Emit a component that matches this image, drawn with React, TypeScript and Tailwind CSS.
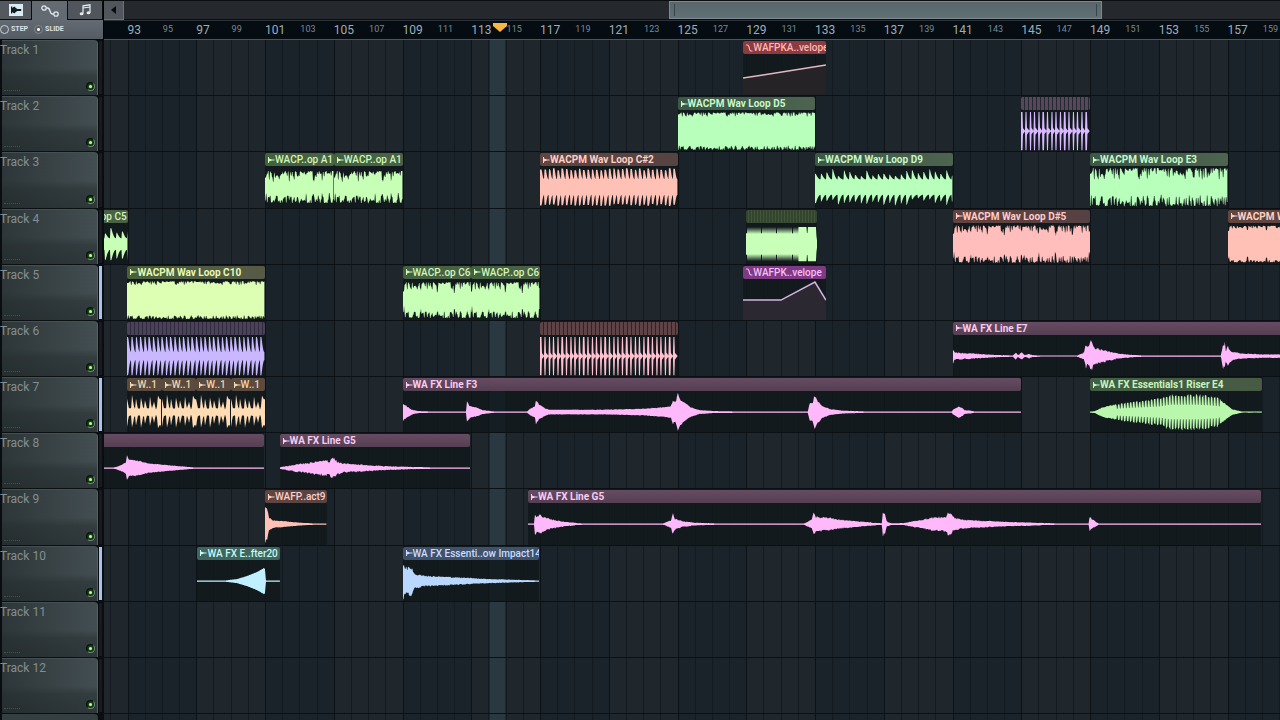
import clsx from 'clsx'

const FIRST_BAR = 91.633
const BAR_SPAN = 68.42
const SAMPLES_PER_BAR = 17.2

type Point = [number, number]

type Wave =
    | { kind: 'noise', level: number, jitter: number, dipEvery?: number, dip?: number }
    | { kind: 'hits', period: number, base: number, peak: number, hold: number, jitter?: number, tail?: number }
    | { kind: 'gate' }
    | { kind: 'riser' }
    | { kind: 'envelope', points: Point[], ripple?: number }
    | { kind: 'automation', points: Point[] }

type Tone = keyof typeof tones

interface Clip {
    title?: string
    start: number
    length: number
    tone: Tone
    wave: Wave
}

interface Track {
    name: string
    active?: boolean
    clips: Clip[]
}

const tones = {
    green: { bar: 'bg-linear-to-r from-[#3b5945] to-[#4c6450] text-[#c9f7cb]', wave: 'fill-[#b8ffbc]' },
    leaf: { bar: 'bg-linear-to-r from-[#42613f] to-[#4b6146] text-[#d2f7b8]', wave: 'fill-[#c8ffb6]' },
    lime: { bar: 'bg-linear-to-r from-[#49603b] to-[#575a46] text-[#e6f9b4]', wave: 'fill-[#dcffb4]' },
    coral: { bar: 'bg-linear-to-r from-[#62453f] to-[#554443] text-[#ffcfc6]', wave: 'fill-[#ffc0b6]' },
    rose: { bar: 'bg-linear-to-r from-[#62443f] to-[#554043] text-[#ffcbc8]', wave: 'fill-[#ffbdbb]' },
    orange: { bar: 'bg-[#5a4b3e] text-[#f2d6b0]', wave: 'fill-[#ffdcb4]' },
    pink: { bar: 'bg-linear-to-b from-[#664c62] to-[#553f52] text-[#f8cbf1]', wave: 'fill-[#ffb9fa]' },
    teal: { bar: 'bg-[#3e6560] text-[#c9f9f0]', wave: 'fill-[#c0f0ff]' },
    blue: { bar: 'bg-[#40516a] text-[#cbdcff]', wave: 'fill-[#b9d7ff]' },
    forest: { bar: 'bg-linear-to-r from-[#405f43] to-[#485a44] text-[#c8f3bd]', wave: 'fill-[#b9f8ac]' },
    red: { bar: 'bg-[#8d3b42] text-[#ffb7b3]', wave: 'fill-[#252326] stroke-[#e2b6c4]' },
    magenta: { bar: 'bg-[#7e3a82] text-[#f6bdf8]', wave: 'fill-[#2b2832] stroke-[#d3b4e2]' },
    violetSlices: { bar: 'bg-[repeating-linear-gradient(90deg,#4c415c_0_3px,#2f2c3a_3px_4px)]', wave: 'fill-[#c9b8ff]' },
    plumSlices: { bar: 'bg-[repeating-linear-gradient(90deg,#584759_0_3px,#252832_3px_4px)]', wave: 'fill-[#d8b9ff]' },
    roseSlices: { bar: 'bg-[repeating-linear-gradient(90deg,#5e4346_0_3px,#26262b_3px_4px)]', wave: 'fill-[#ffc0cf]' },
    olive: { bar: 'bg-[repeating-linear-gradient(90deg,#33452f_0_2px,#435539_2px_3px)]', wave: 'fill-[#c8ffb9]' },
}

const sliceHits: Wave = { kind: 'hits', period: 4.3, base: 0, peak: 1, hold: 0.35, tail: 0.3 }

const tracks: Track[] = [
    {
        name: 'Track 1',
        clips: [
            { title: 'WAFPKA..velope', start: 128.83, length: 4.83, tone: 'red', wave: { kind: 'automation', points: [[0, 23], [20, 20], [83, 10]] } },
        ]
    },
    {
        name: 'Track 2',
        clips: [
            { title: 'WACPM Wav Loop D5', start: 125, length: 8, tone: 'green', wave: { kind: 'noise', level: 0.98, jitter: 0.22 } },
            { start: 145, length: 4, tone: 'plumSlices', wave: sliceHits },
        ]
    },
    {
        name: 'Track 3',
        clips: [
            { title: 'WACP..op A1', start: 101, length: 4, tone: 'leaf', wave: { kind: 'noise', level: 0.84, jitter: 0.45, dipEvery: 8, dip: 0.12 } },
            { title: 'WACP..op A1', start: 105, length: 4, tone: 'leaf', wave: { kind: 'noise', level: 0.84, jitter: 0.45, dipEvery: 8, dip: 0.12 } },
            { title: 'WACPM Wav Loop C#2', start: 117, length: 8, tone: 'coral', wave: { kind: 'hits', period: 4.3, base: 0.4, peak: 1, hold: 0.4, jitter: 0.12 } },
            { title: 'WACPM Wav Loop D9', start: 133, length: 8, tone: 'green', wave: { kind: 'hits', period: 5.7, base: 0.4, peak: 0.98, hold: 0.15, jitter: 0.4 } },
            { title: 'WACPM Wav Loop E3', start: 149, length: 8, tone: 'green', wave: { kind: 'noise', level: 1, jitter: 0.6 } },
        ]
    },
    {
        name: 'Track 4',
        clips: [
            { title: 'WACP..op C5', start: 89, length: 4, tone: 'leaf', wave: { kind: 'hits', period: 5.7, base: 0.3, peak: 0.95, hold: 0.2, jitter: 0.4 } },
            { start: 128.96, length: 4.16, tone: 'olive', wave: { kind: 'gate' } },
            { title: 'WACPM Wav Loop D#5', start: 141, length: 8, tone: 'rose', wave: { kind: 'noise', level: 0.98, jitter: 0.38, dipEvery: 17, dip: 0.25 } },
            { title: 'WACPM Wav Loop D#5', start: 157, length: 8, tone: 'coral', wave: { kind: 'noise', level: 0.96, jitter: 0.14, dipEvery: 19, dip: 0.2 } },
        ]
    },
    {
        name: 'Track 5',
        active: true,
        clips: [
            { title: 'WACPM Wav Loop C10', start: 93, length: 8, tone: 'lime', wave: { kind: 'noise', level: 0.99, jitter: 0.2 } },
            { title: 'WACP..op C6', start: 109, length: 4, tone: 'leaf', wave: { kind: 'noise', level: 0.94, jitter: 0.38, dipEvery: 17, dip: 0.3 } },
            { title: 'WACP..op C6', start: 113, length: 4, tone: 'leaf', wave: { kind: 'noise', level: 0.94, jitter: 0.38, dipEvery: 17, dip: 0.3 } },
            { title: 'WAFPK..velope', start: 128.83, length: 4.83, tone: 'magenta', wave: { kind: 'automation', points: [[0, 20], [38, 20], [72, 2], [83, 20]] } },
        ]
    },
    {
        name: 'Track 6',
        clips: [
            { start: 93, length: 8, tone: 'violetSlices', wave: { kind: 'hits', period: 4.3, base: 0.2, peak: 1, hold: 0.3 } },
            { start: 117, length: 8, tone: 'roseSlices', wave: sliceHits },
            {
                title: 'WA FX Line E7', start: 141, length: 24, tone: 'pink', wave: {
                    kind: 'envelope', ripple: 0.3, points: [
                        [0, 8], [2, 4], [20, 3], [40, 1.4], [60, 0.6], [63, 4], [65, 1], [69, 4], [72, 1], [76, 2.5], [80, 1], [88, 0.5],
                        [124, 0.5], [131, 4], [133, 14], [135, 9], [138, 17], [141, 9], [150, 7], [160, 4], [172, 2], [190, 0.6],
                        [268, 0.6], [270, 12], [272, 15], [273, 6], [275, 10], [279, 5], [288, 3], [310, 2], [330, 2], [412, 1],
                    ]
                }
            },
        ]
    },
    {
        name: 'Track 7',
        active: true,
        clips: [
            ...[93, 95, 97, 99].map((start): Clip => ({
                title: 'W..1', start, length: 2, tone: 'orange', wave: {
                    kind: 'envelope', ripple: 0.15, points: [
                        [0, 15], [2, 4], [4, 4], [5, 18], [7, 6], [8, 4], [9, 14], [11, 4], [13, 4], [14, 17], [16, 5], [17, 4], [18, 13],
                        [20, 4], [22, 4], [23, 16], [25, 4], [27, 11], [29, 3], [30, 6], [31, 17], [33, 14], [34.4, 15],
                    ]
                }
            })),
            {
                title: 'WA FX Line F3', start: 109, length: 36, tone: 'pink', wave: {
                    kind: 'envelope', ripple: 0.15, points: [
                        [0, 9], [4, 6], [9, 2.5], [16, 1], [30, 0.6], [63, 0.6], [64, 11], [67, 6], [73, 5], [80, 2], [92, 0.6],
                        [124, 0.6], [128, 4], [132, 6], [133, 13], [136, 8], [142, 4], [146, 2.5], [200, 2.5], [240, 3.5], [260, 5],
                        [268, 6], [270, 12], [273, 11], [275, 19], [278, 13], [283, 9], [288, 5], [297, 2], [312, 1], [340, 0.6],
                        [405, 0.6], [407, 9], [410, 10], [412, 18], [415, 12], [420, 6], [428, 3], [440, 1.5], [465, 0.6],
                        [549, 0.6], [551, 3], [553, 4], [556, 6], [560, 4], [562, 2], [568, 1.5], [572, 0.6], [619, 0.6],
                    ]
                }
            },
            { title: 'WA FX Essentials1 Riser E4', start: 149, length: 10, tone: 'forest', wave: { kind: 'riser' } },
        ]
    },
    {
        name: 'Track 8',
        clips: [
            {
                start: 89, length: 11.96, tone: 'pink', wave: {
                    kind: 'envelope', ripple: 0.15, points: [
                        [0, 0.6], [55, 0.6], [62, 3], [67, 6], [68, 13], [70, 9], [78, 8], [90, 5], [110, 3], [136, 0.6], [206, 0.6],
                    ]
                }
            },
            {
                title: 'WA FX Line G5', start: 101.85, length: 11.1, tone: 'pink', wave: {
                    kind: 'envelope', ripple: 0.3, points: [
                        [0, 1], [15, 4], [30, 6], [42, 8], [50, 8], [51, 12], [54, 11], [55, 9], [62, 5], [80, 4], [100, 2.5], [125, 1.5], [155, 0.6], [191, 0.6],
                    ]
                }
            },
        ]
    },
    {
        name: 'Track 9',
        clips: [
            {
                title: 'WAFP..act9', start: 101, length: 3.6, tone: 'coral', wave: {
                    kind: 'envelope', ripple: 0.15, points: [[0, 19], [2, 17], [4, 7], [8, 4], [20, 3], [35, 1.5], [50, 0.6], [62, 0.6]]
                }
            },
            {
                title: 'WA FX Line G5', start: 116.3, length: 42.65, tone: 'pink', wave: {
                    kind: 'envelope', ripple: 0.25, points: [
                        [0, 0.6], [6, 0.6], [7, 12], [9, 8], [12, 12], [15, 8], [24, 5], [36, 2.5], [55, 0.6],
                        [135, 0.6], [143, 4], [145, 11], [147, 6], [155, 3], [168, 1.5], [190, 0.6],
                        [276, 0.6], [284, 5], [286, 13], [288, 8], [300, 7], [312, 5], [335, 2.5], [354, 0.8],
                        [355, 12], [357, 11], [359, 3], [364, 0.8], [375, 1], [390, 4], [405, 7], [418, 8], [420, 12], [423, 12], [425, 8],
                        [433, 5], [455, 3.5], [480, 2.5], [510, 1.5], [530, 0.6], [561, 0.6], [562, 8], [565, 5], [571, 0.6], [733, 0.6],
                    ]
                }
            },
        ]
    },
    {
        name: 'Track 10',
        active: true,
        clips: [
            {
                title: 'WA FX E..fter20', start: 97.07, length: 4.83, tone: 'teal', wave: {
                    kind: 'envelope', points: [[0, 0.6], [28, 0.6], [40, 2], [50, 5], [60, 9], [67, 13], [68, 12], [69, 0.6], [83, 0.6]]
                }
            },
            {
                title: 'WA FX Essenti..ow Impact14', start: 109, length: 7.95, tone: 'blue', wave: {
                    kind: 'envelope', ripple: 0.25, points: [
                        [0, 19], [1, 19], [2, 14], [8, 16], [12, 8], [20, 6], [34, 5], [55, 4], [80, 2.5], [110, 1.5], [136, 0.6],
                    ]
                }
            },
        ]
    },
    { name: 'Track 11', clips: [] },
    { name: 'Track 12', clips: [] },
]

const percent = (bars: number) => `${(bars / BAR_SPAN) * 100}%`

const rand = (i: number) => {
    const s = Math.sin(i * 127.1 + 11.7) * 43758.5453
    return s - Math.floor(s)
}

const interpolate = (points: Point[], x: number) => {
    const next = points.findIndex(([px]) => px >= x)
    if (next <= 0) return points[next === 0 ? 0 : points.length - 1][1]
    const [x0, y0] = points[next - 1]
    const [x1, y1] = points[next]
    return y0 + ((x - x0) / (x1 - x0)) * (y1 - y0)
}

const riserShape: Point[] = [[0, 0.6], [5, 1], [12, 5], [30, 9], [55, 12], [70, 14], [80, 18], [110, 18], [128, 15], [136, 8], [142, 3], [152, 0.6], [172, 0.6]]

const amplitude = (wave: Wave, x: number, side: number): number => {
    const n = rand(Math.floor(x) + side * 977)
    switch (wave.kind) {
        case 'noise': {
            const dip = wave.dipEvery && x % wave.dipEvery < 1.5 ? wave.dip ?? 0 : 0
            return 19 * (wave.level - n * n * wave.jitter - dip)
        }
        case 'hits': {
            const phase = (x % wave.period) / wave.period
            const hit = Math.floor(x / wave.period)
            const peak = wave.peak - rand(hit + side * 31) * (wave.jitter ?? 0)
            if (phase < wave.hold) return 19 * peak
            // hits with a tail drop straight down, the others slope to their base
            if (wave.tail) return 19 * wave.tail * (1 - phase)
            const fall = 1 - (phase - wave.hold) / (1 - wave.hold)
            return 19 * (wave.base + (peak - wave.base) * fall * fall)
        }
        case 'gate': {
            if (x > 70) return Math.max(0, 8 * (71.5 - x))
            if (x % 15.2 < 1) return 11
            if (x > 52) return 17
            return Math.floor(x * 2) % 2 ? 17 : 10
        }
        case 'riser': {
            const top = interpolate(riserShape, x)
            return x > 25 && x < 132 && x % 3 < 1 ? top * 0.4 : top * (1 - n * 0.15)
        }
        case 'envelope': {
            const y = interpolate(wave.points, x)
            return y < 1 ? y : y * (1 - n * (wave.ripple ?? 0))
        }
        default:
            return 0
    }
}

const wavePath = (wave: Wave, width: number) => {
    const top: string[] = []
    const bottom: string[] = []
    for (let x = 0; x <= width; x += 0.5) {
        top.push(`${x},${(20 - Math.max(0.5, amplitude(wave, x, 0))).toFixed(1)}`)
        bottom.unshift(`${x},${(20 + Math.max(0.5, amplitude(wave, x, 1))).toFixed(1)}`)
    }
    return `M${[...top, ...bottom].join('L')}Z`
}

const Waveform = ({ clip }: { clip: Clip }) => {
    const width = clip.length * SAMPLES_PER_BAR
    const tone = tones[clip.tone]
    const { wave } = clip
    return (
        <svg className="block min-h-0 w-full flex-1" viewBox={`0 0 ${width} 40`} preserveAspectRatio="none" aria-hidden="true">
            {wave.kind === 'automation' ? (
                <g className={tone.wave}>
                    <path d={`M${wave.points.join('L')}L${width},40L0,40Z`} stroke="none" />
                    <path d={`M${wave.points.join('L')}`} fill="none" strokeWidth="1.5" />
                </g>
            ) : (
                <path className={tone.wave} d={wavePath(wave, width)} />
            )}
        </svg>
    )
}

const ClipIcon = ({ automation }: { automation: boolean }) => (
    <svg className="h-2 w-[7px] shrink-0" viewBox="0 0 7 8" aria-hidden="true">
        {automation
            ? <path d="M0 1h1.500c2.500 0 1 6 3.500 6h1.500" fill="none" stroke="currentColor" strokeWidth="1.200" />
            : <path d="M0 1v6h1V5.600L4 4.500h2.500v-1H4L1 2.400V1z" fill="currentColor" />}
    </svg>
)

const ClipView = ({ clip }: { clip: Clip }) => (
    <div
        className="absolute inset-y-0 flex flex-col gap-px overflow-hidden bg-[#10181b]/80 pt-px"
        style={{ left: percent(clip.start - FIRST_BAR), width: percent(clip.length) }}
    >
        <div
            className={clsx(
                'flex h-[13px] shrink-0 items-center rounded-xs pl-[3px] text-[10px] leading-[13px] whitespace-nowrap',
                // shortened names fill the whole bar, so they take the narrower weight
                clip.title?.includes('..') ? 'font-medium' : 'font-bold',
                tones[clip.tone].bar
            )}
        >
            {clip.title && <ClipIcon automation={clip.wave.kind === 'automation'} />}
            <span>{clip.title}</span>
        </div>
        <Waveform clip={clip} />
    </div>
)

const TrackHeader = ({ track }: { track: Track }) => (
    <div className="flex gap-px border-b border-[#0b1013] bg-[#0a0d10] pr-0.5 pl-0.5">
        <div className="relative flex flex-1 flex-col justify-between rounded-tr-sm border-t border-r border-t-[#465054] border-r-[#56605f] bg-[linear-gradient(to_bottom,transparent_50%,#242c2e80_65%,#20282999),linear-gradient(to_right,#2d3638,#434e52)]">
            <span className="-ml-0.5 pt-px text-[12px] leading-4 text-[#848e90]">{track.name}</span>
            <div className="flex items-end justify-between pr-0.5 pb-1 pl-0.5">
                <span className="w-4 border-b border-dotted border-[#454e51]" />
                <button type="button" aria-label={`Mute ${track.name}`} className="grid size-[9px] place-items-center rounded-full border border-[#0b120c] border-r-[#7d8a86] border-b-[#7d8a86] bg-[#0d2a0e]">
                    <span className="size-[3px] rounded-full bg-[#b6ff9a] shadow-[0_0_2px_#5fe04a]" />
                </button>
            </div>
        </div>
        <span className={clsx('my-px w-[3px]', track.active ? 'bg-[#a9c1ee]' : 'bg-[#171b1f]')} />
    </div>
)

const Ruler = () => {
    const labels = Array.from({ length: 34 }, (_, i) => 93 + i * 2)
    return (
        <div className="flex h-5 items-center overflow-hidden border-y border-t-[#2c3238] border-b-[#4b565d] bg-[#050c12]">
            <span className="shrink-0" style={{ width: percent(93 - FIRST_BAR) }} />
            {labels.map(bar => (
                <span
                    key={bar}
                    className={clsx('shrink-0', bar % 4 === 1 ? 'text-[12px] text-[#9dacb8]' : 'pl-px text-[9px] text-[#7c8a95]')}
                    style={{ width: percent(2) }}
                >
                    {bar}
                </span>
            ))}
        </div>
    )
}

const GridColumns = () => {
    const bars = Array.from({ length: 70 }, (_, i) => 91 + i)
    return (
        <div className="absolute inset-y-0 flex w-full" style={{ left: percent(91 - FIRST_BAR) }}>
            {bars.map(bar => (
                <span
                    key={bar}
                    className={clsx(
                        'shrink-0 border-l',
                        bar % 4 === 1 ? 'border-[#0c1216]' : 'border-[#131b20]',
                        Math.floor((bar - 93) / 4) % 2 === 0 ? 'bg-[#1a2329]' : 'bg-[#1f262c]'
                    )}
                    style={{ width: percent(1) }}
                />
            ))}
        </div>
    )
}

const Toolbar = () => (
    <div className="border-r border-black bg-[#0b0e11]">
        <div className="flex h-5">
            <button type="button" aria-label="Audio clips" className="grid w-8 place-items-center border-t border-r border-b border-[#0b0e11] bg-[#53595f]">
                <svg className="h-3 w-3.5" viewBox="0 0 14 12" aria-hidden="true">
                    <path d="M0 0h14v12H0z" fill="#d9ecf4" />
                    <path d="M2 2.500h1.200v1.500l2-1.500 3 2.500h4v2h-4l-3 2.500-2-1.500v1.500H2z" fill="#151b20" />
                </svg>
            </button>
            <button type="button" aria-label="Automation clips" className="grid w-[35px] place-items-center border-t border-[#0b0e11] bg-[#646a71]">
                <svg className="h-3 w-[18px]" viewBox="0 0 18 12" fill="none" stroke="#dfe6ea" strokeWidth="1.3" aria-hidden="true">
                    <circle cx="3" cy="3" r="2.2" />
                    <circle cx="15" cy="9" r="2.2" />
                    <path d="M5.200 3h1.300c3.500 0 1.500 6 5 6h1.300" />
                </svg>
            </button>
            <button type="button" aria-label="Patterns" className="grid flex-1 place-items-center border border-[#0b0e11] bg-[#50565c]">
                <svg className="h-3 w-3" viewBox="0 0 12 12" aria-hidden="true">
                    <path d="M4 9.500V1.800L11 0.800v8M4 4l7-1" fill="none" stroke="#e8edf0" strokeWidth="1.200" />
                    <ellipse cx="2.600" cy="9.800" rx="1.900" ry="1.500" fill="#e8edf0" />
                    <ellipse cx="9.500" cy="8.800" rx="1.900" ry="1.500" fill="#e8edf0" />
                </svg>
            </button>
        </div>
        <div className="flex h-5 items-center gap-1.5 border-b border-[#0b0e11] bg-linear-to-b from-[#646a71] to-[#565c64] text-[7px] font-bold text-[#dce3e8]">
            <label className="flex items-center gap-0.5">
                <input type="radio" name="mode" className="size-[9px] appearance-none rounded-full border border-[#c9d0d8]" />
                STEP
            </label>
            <label className="flex items-center gap-0.5">
                <input type="radio" name="mode" defaultChecked className="size-[9px] appearance-none rounded-full border border-[#7f878e] bg-[radial-gradient(circle,#fff_0_1px,#565c64_2px)]" />
                SLIDE
            </label>
        </div>
    </div>
)

const ScrollBar = () => (
    <div className="flex h-5 border-t border-[#0b0e11] bg-[#25282d]">
        <button type="button" aria-label="Scroll left" className="grid w-5 place-items-center border-r border-b border-[#6c7279] bg-[#50565c]">
            <svg className="h-2 w-1.5" viewBox="0 0 6 8" aria-hidden="true">
                <path d="M5 0v8L0 4z" fill="#0a0d10" />
            </svg>
        </button>
        <div className="grid flex-1 grid-cols-[545fr_433fr_178fr] border-b border-[#0b0e11]">
            <div role="scrollbar" aria-label="Timeline" aria-controls="lanes" aria-valuenow={47} className="col-start-2 flex justify-between border border-[#7c898e] bg-linear-to-b from-[#59676d] to-[#617075] px-1 py-0.5">
                <span className="w-px bg-[#38444a]" />
                <span className="w-px bg-[#38444a]" />
            </div>
        </div>
    </div>
)

export default function App() {
    const rows = 'grid grid-rows-[repeat(12,minmax(0,1fr))_6px]'
    return (
        <main className="grid h-screen grid-cols-[104px_minmax(0,1fr)] grid-rows-[40px_minmax(0,1fr)] overflow-hidden bg-[#0b0e11] font-['Roboto',sans-serif]">
            <Toolbar />
            <div className="relative">
                <ScrollBar />
                <Ruler />
                <svg className="absolute bottom-2 h-2.5 w-3.5 -translate-x-1/2" style={{ left: percent(114.67 - FIRST_BAR) }} viewBox="0 0 14 10" aria-hidden="true">
                    <path d="M0 1h14v3L7 10 0 4z" fill="#f9b640" />
                </svg>
            </div>
            <div className={rows}>
                {tracks.map(track => <TrackHeader key={track.name} track={track} />)}
                <div className="mr-1.5 ml-0.5 rounded-tr-sm bg-[#353f42]" />
            </div>
            <div id="lanes" className="relative overflow-hidden">
                <GridColumns />
                <div className="absolute inset-y-0 bg-[#2a3841]" style={{ left: percent(114.09 - FIRST_BAR), width: percent(0.87) }} />
                <div className={clsx('relative h-full', rows)}>
                    {tracks.map(track => (
                        <div key={track.name} className="relative border-b border-[#0a1014]">
                            {track.clips.map(clip => <ClipView key={clip.start} clip={clip} />)}
                        </div>
                    ))}
                </div>
            </div>
        </main>
    )
}
